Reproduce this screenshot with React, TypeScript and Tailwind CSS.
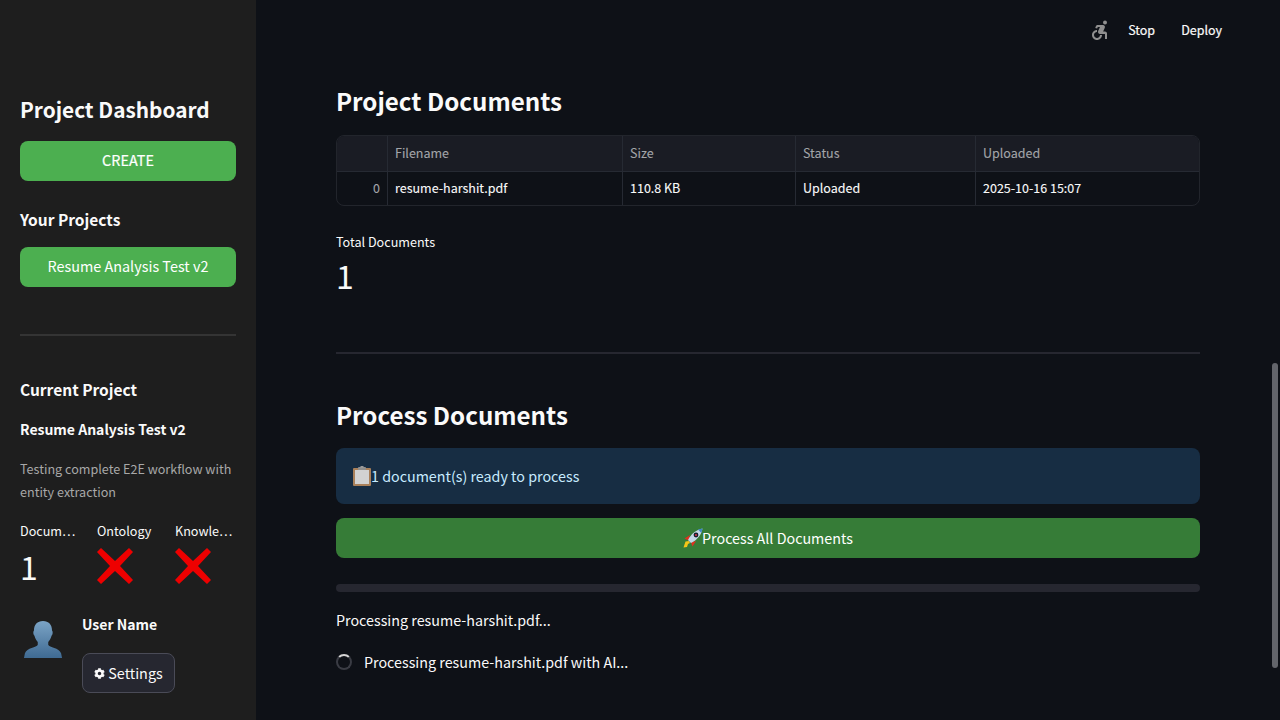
import { FaCog } from "react-icons/fa";
import { MdAccessibleForward } from "react-icons/md";

const font = { fontFamily: '"Noto Sans CJK SC", "Noto Sans", sans-serif' };

function RedCross() {
  return (
    <svg width="36" height="36" viewBox="0 0 36 36" className="block">
      <path d="M4 0 L18 13 L32 0 L36 4 L23 18 L36 32 L32 36 L18 23 L4 36 L0 32 L13 18 L0 4 Z" fill="#ee0000" />
    </svg>
  );
}

function UserIcon() {
  return (
    <svg width="40" height="39" viewBox="0 0 42 41" className="block">
      <defs>
        <linearGradient id="bust" x1="0" y1="0" x2="0" y2="1">
          <stop offset="0" stopColor="#7ba4c6" />
          <stop offset="1" stopColor="#3f6a92" />
        </linearGradient>
      </defs>
      <path
        d="M21 1 C27 1 30.5 5 30.5 11 C31.5 12 31.5 15 30 16.5 C29 20 27.5 22 26.5 23 L26.5 26 C27.5 29 38 29 40 35 L41 40 L1 40 L2 35 C4 29 14.5 29 15.5 26 L15.5 23 C14.5 22 13 20 12 16.5 C10.5 15 10.5 12 11.5 11 C11.5 5 15 1 21 1 Z"
        fill="url(#bust)"
      />
    </svg>
  );
}

function Clipboard() {
  return (
    <svg width="20" height="20" viewBox="0 0 20 20" className="block shrink-0 mr-[-1px]">
      <rect x="1" y="2" width="18" height="18" rx="1" fill="#a9805a" />
      <rect x="3" y="4" width="14" height="14" fill="#d2d2d2" />
      <rect x="6" y="1" width="8" height="3" rx="1" fill="#8f8f8f" />
      <rect x="8.5" y="0" width="3" height="2" fill="#9a9a9a" />
    </svg>
  );
}

function Rocket() {
  return (
    <svg width="20" height="20" viewBox="0 0 20 20" className="block shrink-0 mr-[-1px]">
      <path d="M0.5 19.5 L2.5 13.5 L6 13 L7 15 L5 16 L4 19 Z" fill="#f5c518" />
      <path d="M1.5 10.5 L7 7 L5.5 12.5 Z" fill="#e03020" />
      <path d="M9.5 18.5 L13 13 L8 14.5 Z" fill="#e03020" />
      <path d="M5 12 C8 6 13 2 19.5 0.5 C18.5 7 14 12 8 15 Z" fill="#c4d8e8" />
      <path d="M15 1.6 L19.5 0.5 L18.4 5 Z" fill="#3f86c8" />
      <circle cx="13" cy="7" r="2.4" fill="#14202e" />
      <circle cx="13" cy="7" r="1.1" fill="#d0344a" />
    </svg>
  );
}

const columns = ["w-[51px]", "w-[235px]", "w-[173px]", "w-[180px]", "flex-1"];

function Cell({ width, border, children, muted, right }: { width: string; border?: boolean; children?: React.ReactNode; muted?: boolean; right?: boolean }) {
  return (
    <div
      className={`${width} h-full flex items-center px-[7px] pb-[1px] text-[12.5px] [-webkit-text-stroke:0.1px] ${border ? "border-r border-[#262a33]" : ""} ${muted ? "text-[#a3a5a9]" : "text-[#fafafa]"} ${right ? "justify-end" : ""}`}
    >
      {children}
    </div>
  );
}

function Metric({ label, children, width }: { label: string; children: React.ReactNode; width: string }) {
  return (
    <div className={width}>
      <div className="text-[12.6px] leading-[24px] h-[24px] text-[#fafafa] whitespace-nowrap">{label}</div>
      <div className="mt-[5px] h-[36px] flex items-center text-[32px] text-[#fafafa] leading-[32px]">{children}</div>
    </div>
  );
}

export default function App() {
  return (
    <div style={font} className="flex h-[720px] w-[1280px] overflow-hidden bg-[#0e1117] text-[#fafafa] relative">
      <aside className="w-[256px] shrink-0 h-full bg-[#1e1e1e] px-5 pt-[91px]">
        <h2 className="text-[20.8px] leading-[36px] font-semibold">Project Dashboard</h2>
        <button className="mt-[14px] w-full h-10 pb-[2px] rounded-lg bg-[#4caf50] text-white text-[14.4px] leading-6 [-webkit-text-stroke:0.2px]">CREATE</button>
        <h3 className="mt-[25px] text-[15.5px] leading-[27px] font-semibold">Your Projects</h3>
        <button className="mt-[14px] w-full h-10 pb-[2px] rounded-lg bg-[#4caf50] text-white text-[14.4px] leading-6">Resume Analysis Test v2</button>
        <div className="mt-[47px] h-[2px] bg-[#343434]"></div>
        <h3 className="mt-[40px] text-[15.5px] leading-[27px] font-semibold">Current Project</h3>
        <div className="mt-[14px] text-[14px] leading-6 font-semibold">Resume Analysis Test v2</div>
        <p className="mt-[16px] text-[12.6px] leading-[23px] text-[#a8a8a8]">Testing complete E2E workflow with entity extraction</p>
        <div className="mt-[16px] flex">
          <Metric label="Docum…" width="w-[77px]">1</Metric>
          <Metric label="Ontology" width="w-[78px]"><RedCross /></Metric>
          <Metric label="Knowle…" width="w-[61px]"><RedCross /></Metric>
        </div>
        <div className="mt-[28px] flex">
          <div className="w-[62px] pl-[3px] pt-[8px]"><UserIcon /></div>
          <div>
            <div className="text-[14px] leading-6 font-semibold">User Name</div>
            <button className="mt-[17px] h-10 w-[93px] pb-[1px] rounded-lg border border-[#4a4b57] bg-[#262730] flex items-center justify-center gap-[3px] text-[14.4px] text-[#fafafa]">
              <FaCog className="text-[11px] mt-[2px]" />
              Settings
            </button>
          </div>
        </div>
      </aside>

      <main className="flex-1 min-w-0">
        <div className="h-[60px] flex items-center justify-end gap-[26px] pr-[58px] text-[12.5px] [-webkit-text-stroke:0.2px]">
          <MdAccessibleForward className="text-[#8f8f8f] text-[24px] mr-[-10px]" />
          <span>Stop</span>
          <span>Deploy</span>
        </div>
        <div className="ml-[80px] w-[864px]">
          <h2 className="mt-[20px] text-[24.15px] leading-[42px] font-semibold">Project Documents</h2>
          <div className="mt-[13px] h-[71px] rounded-lg border border-[#22252c] overflow-hidden">
            <div className="h-[36px] flex bg-[#1a1c24] border-b border-[#262a33]">
              <Cell width={columns[0]} border />
              <Cell width={columns[1]} border muted>Filename</Cell>
              <Cell width={columns[2]} border muted>Size</Cell>
              <Cell width={columns[3]} border muted>Status</Cell>
              <Cell width={columns[4]} muted>Uploaded</Cell>
            </div>
            <div className="h-[34px] flex">
              <Cell width={columns[0]} border muted right>0</Cell>
              <Cell width={columns[1]} border>resume-harshit.pdf</Cell>
              <Cell width={columns[2]} border>110.8 KB</Cell>
              <Cell width={columns[3]} border>Uploaded</Cell>
              <Cell width={columns[4]}>2025-10-16 15:07</Cell>
            </div>
          </div>
          <div className="mt-[24px] text-[12.6px] leading-[24px]">Total Documents</div>
          <div className="mt-[-3px] text-[32px] leading-[48px]">1</div>
          <div className="mt-[53px] h-[2px] bg-[#262730]"></div>
          <h2 className="mt-[40px] text-[24.15px] leading-[42px] font-semibold">Process Documents</h2>
          <div className="mt-[12px] h-14 rounded-lg bg-[#172d43] flex items-center px-4 text-[14.3px] text-[#c7ebff]">
            <Clipboard />
            <span>1 document(s) ready to process</span>
          </div>
          <button className="mt-[14px] w-full h-10 rounded-lg bg-[#367c37] flex items-center justify-center text-[14.3px] text-white">
            <Rocket />
            <span>Process All Documents</span>
          </button>
          <div className="mt-[26px] h-2 rounded-full bg-[#262730]"></div>
          <div className="mt-[16px] text-[14.3px] leading-6">Processing resume-harshit.pdf...</div>
          <div className="mt-[18px] flex items-center gap-3 text-[14.3px] leading-6">
            <div className="w-4 h-4 rounded-full border-2 border-[#3a3c44] border-t-[#d5d5d5]"></div>
            <span>Processing resume-harshit.pdf with AI...</span>
          </div>
        </div>
      </main>

      <div className="absolute left-[1272px] top-[363px] w-[6px] h-[305px] rounded-full bg-[#63656b]"></div>
    </div>
  );
}
